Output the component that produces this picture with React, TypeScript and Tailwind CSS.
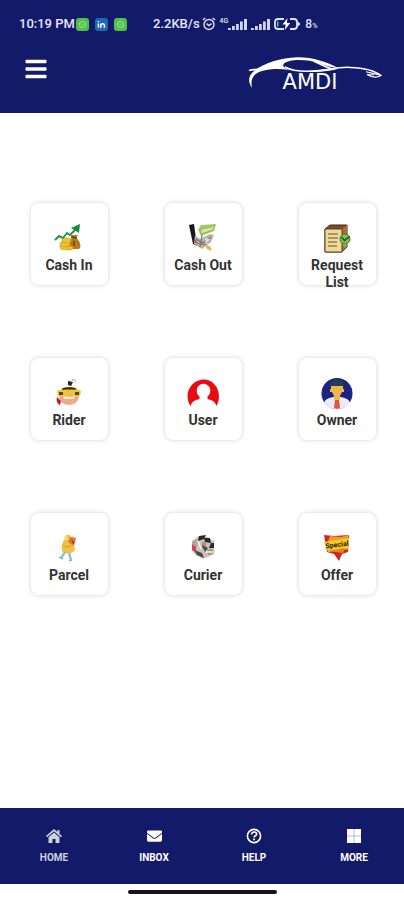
import type { ReactNode } from "react";
import { FaBars, FaEnvelope } from "react-icons/fa";

function ChatBadge() {
  return (
    <svg className="h-[13px] w-[13px]" viewBox="0 0 13 13" aria-hidden="true">
      <rect width="13" height="13" rx="3" fill="#4fc04a" />
      <circle cx="6.5" cy="6.5" r="3" fill="none" stroke="#8ddb87" strokeWidth="1.2" />
      <circle cx="6.5" cy="6.5" r="1" fill="#7ed678" />
    </svg>
  );
}

function LinkedInBadge() {
  return (
    <svg className="h-[13px] w-[13px]" viewBox="0 0 13 13" aria-hidden="true">
      <rect width="13" height="13" rx="3" fill="#1c69b8" />
      <path d="M3.4 5.6v4M3.4 3v1.2M5.8 9.8V5.6M5.8 7.4c0-2.1 3.6-2.3 3.6 0v2.4" stroke="#fff" strokeWidth="1.5" fill="none" />
    </svg>
  );
}

function AlarmIcon() {
  return (
    <svg className="h-[14px] w-[14px]" viewBox="0 0 14 14" fill="none" stroke="#dfe1f2" strokeWidth="1.4" aria-hidden="true">
      <circle cx="7" cy="7.5" r="5" />
      <path d="M1 3l2.4-2M13 3l-2.4-2M4.6 6.6L7 8.6l2.6-2" />
    </svg>
  );
}

function SignalIcon() {
  return (
    <svg className="h-3 w-[19px]" viewBox="0 0 19 12" fill="#d3d6ec" aria-hidden="true">
      <rect x="0" y="10" width="2.8" height="2" />
      <rect x="4" y="8" width="2.8" height="4" />
      <rect x="8" y="6" width="2.8" height="6" />
      <rect x="12" y="3.5" width="2.8" height="8.5" />
      <rect x="16" y="1" width="3" height="11" />
    </svg>
  );
}

function BatteryIcon() {
  return (
    <svg className="h-3 w-[27px]" viewBox="0 0 27 12" aria-hidden="true">
      <path d="M10 1H4a3 3 0 0 0-3 3v4a3 3 0 0 0 3 3h6M16 1h4a3 3 0 0 1 3 3v4a3 3 0 0 1-3 3h-4" fill="none" stroke="#dfe1f2" strokeWidth="1.8" />
      <path d="M23.500 3l3 3-3 3z" fill="#dfe1f2" />
      <path d="M3 3.500h1.500v5H3z" fill="#6fbd6b" />
      <path d="M13.500 0L8.500 6.500h3.200L10.800 12l5.400-7h-3.400z" fill="#fff" />
    </svg>
  );
}

function Logo() {
  return (
    <svg className="h-[38px] w-[136px]" viewBox="0 0 136 38" role="img" aria-label="AMDI">
      <path
        d="M4 32C-1 25 1 19 6 15C16 7 33 2 49 1.300C64 1 79 6 90 12C78 11 73 7 62 4.800C50 3 40 4 36 7.500C34 9.500 36 12 41 14C30 12 17 13 10 16.500C4 20 2.500 25 4 32z"
        fill="#fff"
      />
      <path d="M1 14.500C6 13 12 13.500 20 12M37 11C44 15 58 16 72 14.500C82 13.400 89 11 102 11.400C114 11.800 125 13 133 19.500" fill="none" stroke="#fff" strokeWidth="1.500" />
      <path d="M54 15C66 16 74 12 90 12.800C82 15.500 66 17 54 15z" fill="#fff" />
      <path d="M66 5.500C72 7 76 11 83 12.500" fill="none" stroke="#fff" strokeWidth="1.500" />
      <path d="M118 15.800C122 17 126 17 133 19.500C129 22 124 21.500 119 18.500L126 19" fill="none" stroke="#fff" strokeWidth="1.100" />
      <text x="62" y="33" textAnchor="middle" fill="#fff" fontSize="21" fontFamily="'DejaVu Sans', sans-serif">AMDI</text>
    </svg>
  );
}

function Picture({ children }: { children: ReactNode }) {
  return (
    <svg className="h-8 w-8 shrink-0" viewBox="0 0 32 32" aria-hidden="true">
      {children}
    </svg>
  );
}

const cashIn = (
  <Picture>
    <path d="M2 17l4-4 4 2 4-5 3 2 7-7" fill="none" stroke="#259345" strokeWidth="2" />
    <path d="M18 5l9-4-1 9-3-2z" fill="#168b3c" />
    <path d="M18 12h7l-2 3c5 3 6 11 2 11h-8c-4 0-3-8 2-11z" fill="#b77920" />
    <path d="M18 14l6 1M21 18v5" stroke="#653c10" strokeWidth="1.400" />
    <g fill="#ecc32c" stroke="#c99a1c" strokeWidth=".7">
      <ellipse cx="12" cy="24" rx="5" ry="2.800" />
      <ellipse cx="12" cy="21" rx="5" ry="2.600" />
      <ellipse cx="13.500" cy="17.500" rx="4.500" ry="2.600" />
      <ellipse cx="17" cy="25" rx="3" ry="2" />
    </g>
  </Picture>
);

const cashOut = (
  <Picture>
    <path d="M2 2l5-1 3 22-4-2z" fill="#171819" />
    <path d="M11 7l3-5 15-1-2 7-13 5z" fill="#a6c968" />
    <path d="M14 6l10-2 4-2-2 5-12 4z" fill="#d7e6a4" stroke="#86ad4d" strokeWidth=".8" />
    <path d="M8 12l5 4 10-5 4 1-3 7-9 7-8-5z" fill="#b9b2a9" />
    <path d="M9 16l7 4 8-6M10 20l9 2M15 12l-2 12" stroke="#7c756e" strokeWidth="1.200" fill="none" />
    <path d="M18 15l5 1-4 5z" fill="#e2ddd5" />
    <path d="M18 22l5 1 2 5-5-2z" fill="#dfb73e" />
    <path d="M8 17l2 1v2H8z" fill="#c54d43" />
  </Picture>
);

const requestList = (
  <Picture>
    <path d="M4 6l5-4h17v22l-5 5H4z" fill="#7c4b26" stroke="#412b1b" strokeWidth="1" />
    <path d="M21 6l5-4v22l-5 5z" fill="#a96c35" />
    <path d="M4 6h17v23H4z" fill="#edd998" stroke="#5b442c" strokeWidth="1" />
    <path d="M7 11h10M7 15h10M7 19h9M7 23h9" stroke="#65553a" strokeWidth="1.200" />
    <circle cx="24" cy="16" r="5" fill="#88bd53" stroke="#407a2c" strokeWidth="1" />
    <path d="M20.500 14l3 3.500 5-4" fill="none" stroke="#1e6527" strokeWidth="1.700" />
    <path d="M21 21l3 4 2-4" fill="#85b456" />
  </Picture>
);

const rider = (
  <Picture>
    <path d="M15 3l5 1-2 4-3-1z" fill="#222" />
    <path d="M19 3c0-3 4-2 3 1" fill="none" stroke="#a5a5a5" strokeWidth="1" />
    <path d="M8 12c2-4 15-4 17 0l1 3H6z" fill="#e8b729" />
    <ellipse cx="16" cy="11" rx="7" ry="1.800" fill="#24221c" />
    <path d="M4 13c1-2 23-2 24 0l-1 5c-3 2-19 2-22 0z" fill="#f2c42e" />
    <path d="M6 14h4v3H6zM22 14h4v3h-4z" fill="#4b473c" />
    <path d="M6 19c6-2 15-2 20 0-1 5-5 8-10 8s-9-3-10-8z" fill="#e8ad8c" />
    <path d="M10 18c4 1 9 1 12 0l-1 3H11z" fill="#f5e5cf" />
    <path d="M4 19l4 4-1 4c-3-1-4-5-3-8z" fill="#c91825" />
  </Picture>
);

const user = (
  <Picture>
    <path d="M3.500 28C-1 21 0 13 4 8C10 0 22-1 28 7C33 13 33 22 29.500 28C28 23 24 22 20.500 21V18.500C22.300 17 23.300 15 23.300 12.500A6.800 6.800 0 0 0 9.700 12.500C9.700 15 10.700 17 12.500 18.500V21C9 22 5 23 3.500 28z" fill="#e90b12" />
  </Picture>
);

const owner = (
  <Picture>
    <circle cx="16" cy="15.500" r="15.500" fill="#1c2384" />
    <path d="M3 25c1-4 5-5 9-6h8c4 1 8 2 9 6-6 8-20 8-26 0z" fill="#eceaf5" />
    <path d="M9 8c0-9 14-9 14 0l-2 3H11z" fill="#214252" />
    <path d="M10 8h12v3h1v3h-2l-2 4v3l-3 3-3-3v-3l-2-4H9v-3h1z" fill="#efb64c" />
    <path d="M14 22h4l1 8-3 1-3-1z" fill="#e55245" />
  </Picture>
);

const parcel = (
  <Picture>
    <path d="M12 6c-1-4 4-6 6-2 4-2 5 3 2 6l2 6c-1 5-10 6-13 2-1-5 0-9 3-12z" fill="#efc23f" />
    <path d="M17 4l6 1-2 8-6-4z" fill="#d77d36" />
    <path d="M18 6l4 3-2 3z" fill="#a94c28" />
    <circle cx="13" cy="5" r="2" fill="#ffdb83" />
    <path d="M12 19l-4 6M16 20l2 7" stroke="#8bc3d4" strokeWidth="2.400" />
    <path d="M6 24l4 2M16 28l3-1" stroke="#6da6b8" strokeWidth="1.200" />
    <path d="M10 12c3 3 7 2 10-1" stroke="#d69a28" strokeWidth="1" fill="none" />
  </Picture>
);

const curier = (
  <Picture>
    <path d="M5 8l7-5 9 1 4 4 2-1v14l-6 3-5 2-7-4-4-4z" fill="#c9c2bb" />
    <path d="M5 9l4-3 2 5-3 6-3-1z" fill="#aaa" />
    <path d="M5 11l4 3v5l-4-2z" fill="#dc4051" />
    <path d="M12 3l7-1-2 4-6 2zM17 5h6l1 5-6-1zM24 10h3v5h-5z" fill="#292929" />
    <path d="M15 9h4v7h-4zM20 17l6-1v5l-5 1z" fill="#a8956e" />
    <path d="M7 17l8 3 2 5-7-3zM15 12l6 3-3 4z" fill="#4b4849" />
    <path d="M11 8l3 8M19 19l7 0" stroke="#f7f4ef" strokeWidth="1.500" />
  </Picture>
);

const offer = (
  <Picture>
    <path d="M3 2l10 1 15-1-1 17-6 2-3 7-5-7-7-2z" fill="#ce2430" />
    <path d="M9 3l11 1 8-2-2 5-20 4z" fill="#f39b25" />
    <path d="M3 9l25-4v11L7 19z" fill="#f3cb25" />
    <path d="M7 18l17-3-2 5z" fill="#ef7e1e" />
    <text x="16" y="14" textAnchor="middle" fontSize="7" fontWeight="700" fontFamily="Roboto, sans-serif" fill="#241f0c" transform="rotate(-8 16 12)">Special</text>
  </Picture>
);

const tiles = [
  { label: "Cash In", icon: cashIn },
  { label: "Cash Out", icon: cashOut },
  { label: "Request List", icon: requestList },
  { label: "Rider", icon: rider },
  { label: "User", icon: user },
  { label: "Owner", icon: owner },
  { label: "Parcel", icon: parcel },
  { label: "Curier", icon: curier },
  { label: "Offer", icon: offer },
];

const homeIcon = (
  <svg className="h-4 w-4" viewBox="0 0 16 16" fill="currentColor" aria-hidden="true">
    <path d="M8 1L0 8l1 1.200 7-6 7 6L16 8l-2.500-2.200V2h-2v2z" />
    <path d="M8 4.500l-5.500 4.700V15h4v-4h3v4h4V9.200z" />
  </svg>
);

const helpIcon = (
  <svg className="h-4 w-4" viewBox="0 0 16 16" fill="none" stroke="currentColor" aria-hidden="true">
    <circle cx="8" cy="8" r="6.600" strokeWidth="1.600" />
    <path d="M5.600 6.500c0-3.500 5-3 5-.3 0 1.800-2.500 1.500-2.500 3.300M8.100 10.600v1.600" strokeWidth="1.700" />
  </svg>
);

const moreIcon = (
  <svg className="h-4 w-4" viewBox="0 0 16 16" aria-hidden="true">
    <rect x="1" y="1" width="14" height="14" fill="#b5b7d6" />
    <path d="M1 1h6.500v6.500H1zM8.500 1H15v6.500H8.500zM1 8.500h6.500V15H1zM8.500 8.500H15V15H8.500z" fill="currentColor" />
  </svg>
);

const tabs = [
  { label: "HOME", icon: homeIcon, active: true },
  { label: "INBOX", icon: <FaEnvelope className="h-4 w-[15px]" />, active: false },
  { label: "HELP", icon: helpIcon, active: false },
  { label: "MORE", icon: moreIcon, active: false },
];

export default function App() {
  return (
    <div className="flex min-h-screen flex-col bg-white font-['Roboto',sans-serif] text-[#333]">
      <header className="bg-[#141a6a] pb-5 text-white">
        <div className="flex h-12 items-center pl-[19px] text-xs font-medium text-[#e4e6f5]">
          <span className="w-[57px] whitespace-nowrap text-[13px]">10:19 PM</span>
          <div className="flex gap-[6px]">
            <ChatBadge />
            <LinkedInBadge />
            <ChatBadge />
          </div>
          <span className="ml-[26px] whitespace-nowrap text-[13px]">2.2KB/s</span>
          <div className="ml-[2px] flex items-center gap-1">
            <AlarmIcon />
            <div className="flex items-center">
              <span className="self-start text-[7px] leading-[7px]">4G</span>
              <SignalIcon />
            </div>
            <SignalIcon />
            <BatteryIcon />
            <span>
              8<span className="text-[7px]">%</span>
            </span>
          </div>
        </div>
        <div className="flex h-[45px] items-center justify-between pr-5 pl-[25px]">
          <button type="button" aria-label="Open menu" className="flex pb-1">
            <FaBars className="h-6 w-[22px]" />
          </button>
          <a href="#home" className="block pt-2">
            <Logo />
          </a>
        </div>
      </header>

      <main className="grid flex-1 grid-cols-3 content-start justify-items-center gap-y-[73px] pt-[90px] pb-16 pl-[2px]">
        {tiles.map(({ label, icon }) => (
          <button
            key={label}
            type="button"
            className="flex h-[82px] w-[77px] flex-col items-center rounded-lg bg-white px-2 pt-5 shadow-[0_0_5px_rgba(0,0,0,0.18)]"
          >
            {icon}
            <span className="mt-[2px] text-center text-sm leading-[17px] font-bold">{label}</span>
          </button>
        ))}
      </main>

      <nav className="grid h-[76px] grid-cols-4 bg-[#141a6a] pl-1">
        {tabs.map(({ label, icon, active }) => (
          <a
            key={label}
            href={`#${label.toLowerCase()}`}
            className={`flex flex-col items-center gap-2 pt-5 text-[10px] leading-3 font-bold ${active ? "text-[#cfd0d8]" : "text-white"}`}
          >
            {icon}
            <span>{label}</span>
          </a>
        ))}
      </nav>
      <footer className="flex h-4 items-center justify-center">
        <div className="h-1 w-[149px] rounded-full bg-[#161616]" />
      </footer>
    </div>
  );
}
